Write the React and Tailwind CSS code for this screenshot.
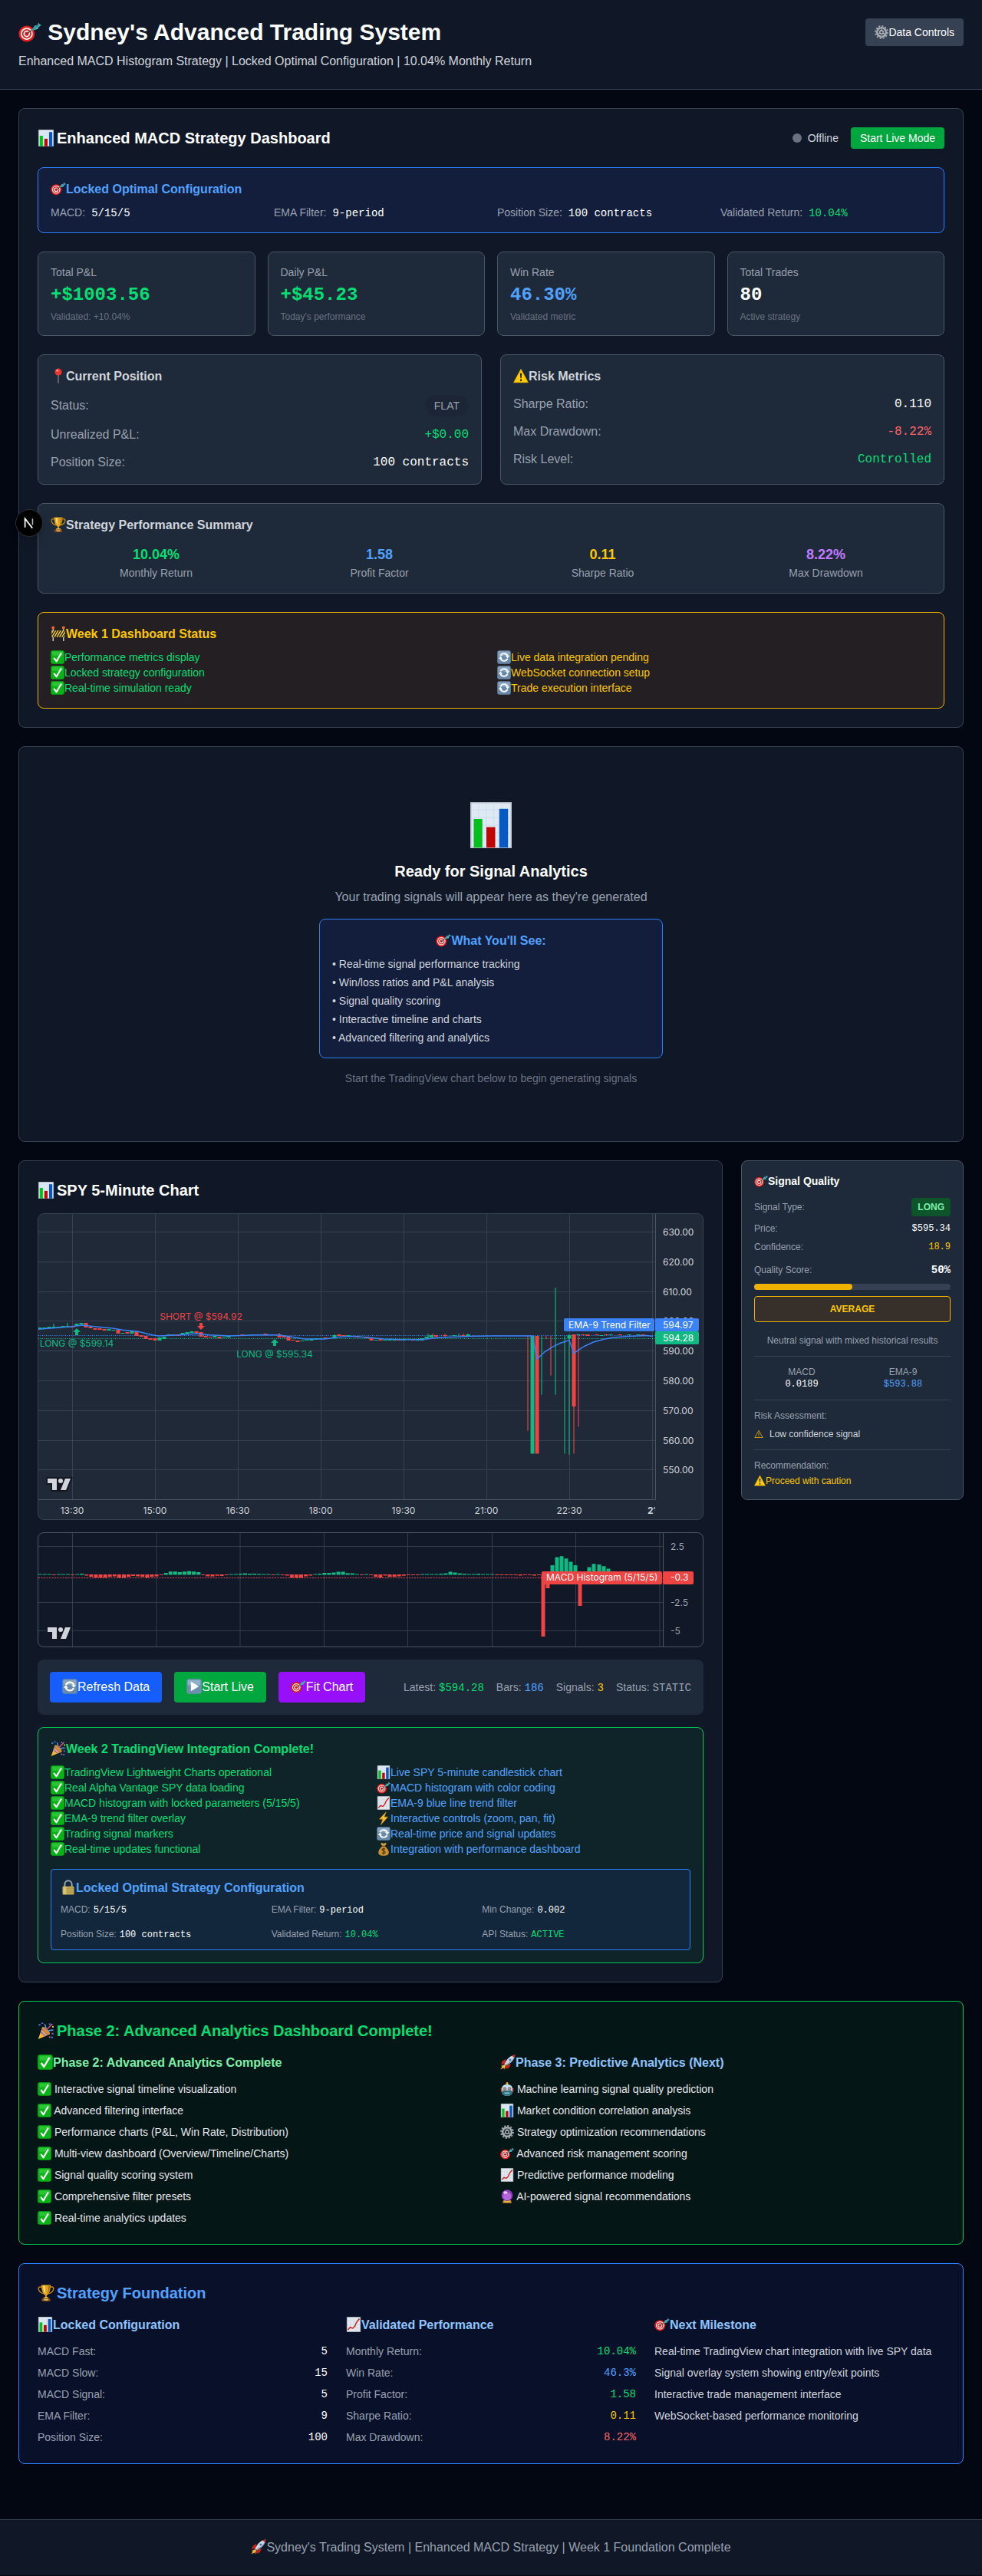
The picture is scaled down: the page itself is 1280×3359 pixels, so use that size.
import React from "react";

/* ---------- Pictograms (24 x 24 grid) ---------- */

const glyphs = {
  target: (
    <>
      <circle cx="8.700" cy="13.600" r="8.500" fill="#b81212" />
      <circle cx="8.700" cy="13.600" r="8" fill="#e02424" />
      <circle cx="8.700" cy="13.600" r="6.300" fill="#f4f4f4" />
      <circle cx="8.700" cy="13.600" r="4.900" fill="#dc1c1c" />
      <circle cx="8.700" cy="13.600" r="3.500" fill="#f4f4f4" />
      <circle cx="8.700" cy="13.600" r="2.100" fill="#dc1c1c" />
      <path d="M8.900 13.500 17 7.600" stroke="#4a4238" strokeWidth="1.200" />
      <path d="M13 10.600 17.500 4.800 19.300 5.200 21.200 2 22 3.800 24 4.600 20.600 7 20.400 8.600Z" fill="#4fb6bd" />
      <path d="M15 9.400 21.600 4.200" stroke="#2b7e86" strokeWidth="0.900" />
    </>
  ),
  bars: (
    <>
      <path d="M1.500.3h21v23.400h-21z" fill="#dfe9f3" stroke="#b9c2cc" strokeWidth="0.600" />
      <path d="M1.500 4h21M1.500 8h21M1.500 12h21M1.500 16h21M1.500 20h21M5.500.3v23.400M9.500.3v23.400M13.500.3v23.400M17.500.3v23.400" stroke="#c9dcf0" strokeWidth="0.350" />
      <path d="M3 8.800h4.500v14.900H3z" fill="#05bf1c" />
      <path d="M9.600 13h4.600v10.700H9.600z" fill="#bf0606" />
      <path d="M16.300 3.500h4.600v20.200h-4.600z" fill="#0559c4" />
    </>
  ),
  trend: (
    <>
      <path d="M1.500.5h21v23h-21z" fill="#e3e8ee" stroke="#b9c2cc" strokeWidth="0.600" />
      <path d="M1.500 6.500h21M1.500 12h21M1.500 17.500h21M7 .5v23M12 .5v23M17 .5v23" stroke="#c4ccd6" strokeWidth="0.500" />
      <path d="M3 20.500 6.500 16.500 10.500 18 14 14.500 16 9.500 21 3" fill="none" stroke="#d01f1f" strokeWidth="1.800" />
    </>
  ),
  pin: (
    <>
      <path d="M11.400 9h1.300v14l-.65.900-.65-.900z" fill="#9a8f8b" />
      <circle cx="12" cy="6" r="5.500" fill="#e8372c" />
      <ellipse cx="10.400" cy="4" rx="1.900" ry="1.500" fill="#ff9a8f" />
    </>
  ),
  warning: (
    <>
      <path d="M12 1.600 23.400 22.600H.6z" fill="#ffcc00" stroke="#e5a900" strokeWidth="0.800" strokeLinejoin="round" />
      <path d="M10.600 8h2.800l-.6 8h-1.600z" fill="#1d1d1d" />
      <circle cx="12" cy="19" r="1.500" fill="#1d1d1d" />
    </>
  ),
  trophy: (
    <>
      <path d="M6 3.500C2 2.500.8 4.500 1.500 7c.8 2.800 3.400 5 7 6M18 3.500c4-1 5.200 1 4.500 3.500-.8 2.800-3.400 5-7 6" fill="none" stroke="#c98a12" strokeWidth="1.600" />
      <path d="M5.400.5h13.200c0 7-2 12.500-5.600 15v3.500h-2v-3.500C7.400 13 5.400 7.500 5.400.5z" fill="#e2a21c" />
      <path d="M8 1.500h2.600c0 5 .4 9 1 12C9.200 11 8 7 8 1.500z" fill="#ffe27a" />
      <path d="M15.500 1.500h2c-.2 5-1.500 9-3.500 11.500 1.200-3.500 1.500-7.500 1.500-11.500z" fill="#a66a08" />
      <path d="M9 18h6l1.200 2.200H7.800z" fill="#f1bd3c" />
      <path d="M6 20h12v3.700H6z" fill="#8b4a12" />
      <path d="M9 21h6v1.500H9z" fill="#f4d67a" />
    </>
  ),
  barrier: (
    <>
      <path d="M3 4h1.800v20H3zM19.200 4H21v20h-1.800z" fill="#c3c7cd" />
      <path d="M1.500 7.500h21v10h-21z" fill="#f0cd32" />
      <path d="M1.500 15 6 7.500M3.800 17.500l6-10M7.800 17.500l6-10M11.800 17.500l6-10M15.800 17.500l6-10M19.800 17.500l2.700-4.500" stroke="#272319" strokeWidth="1.700" />
      <circle cx="3.900" cy="3" r="2.400" fill="#f0642a" />
      <circle cx="20.100" cy="3" r="2.400" fill="#f0642a" />
    </>
  ),
  check: (
    <>
      <rect x="0.300" y="0.300" width="23.400" height="23.400" rx="3.600" fill="#09b316" />
      <path d="M3 2h18v7H3z" fill="#3fd04a" opacity="0.600" />
      <path d="M5.600 13.200 10 19.200 18.600 4.600" fill="none" stroke="#fff" strokeWidth="2.800" strokeLinejoin="round" />
    </>
  ),
  refresh: (
    <>
      <rect x="0.300" y="0.300" width="23.400" height="23.400" rx="3.600" fill="#6789ab" />
      <path d="M2 2h20v8H2z" fill="#a9c4da" opacity="0.500" />
      <path d="M6 9.500A6.600 6.600 0 0 1 18.300 10M18 14.500A6.600 6.600 0 0 1 5.700 14" fill="none" stroke="#fff" strokeWidth="2.600" />
      <path d="M14.600 9.800h7.200L18.200 14zM2.200 14.200h7.200L5.800 10z" fill="#fff" />
    </>
  ),
  play: (
    <>
      <rect x="0.300" y="0.300" width="23.400" height="23.400" rx="3.600" fill="#6d8fae" />
      <path d="M2 2h20v8H2z" fill="#a9c4da" opacity="0.600" />
      <path d="M7 4.500v15L19.500 12z" fill="#fff" />
    </>
  ),
  party: (
    <>
      <path d="M6.800 6.500 17.500 17 .8 24z" fill="#f2b632" />
      <path d="M4.600 13.500 10.800 19.800M6 9.500l8.800 8.700" fill="none" stroke="#9a5fd0" strokeWidth="1.800" />
      <ellipse cx="12.200" cy="11.800" rx="7" ry="2.600" transform="rotate(45 12.200 11.800)" fill="#d98f1e" />
      <path d="M11.500 10c1-3 0-5-1.500-7.500M14 12.500c3-.5 5-2.500 8.500-1" fill="none" stroke="#5a8fe0" strokeWidth="1.700" />
      <path d="M13 11c2-4 5.500-5 8-9" fill="none" stroke="#e0527f" strokeWidth="1.700" />
      <path d="M1.500 2.500h2.600v2.200H1.500zM16 1.500h2.200v2.200H16zM20 15h2.600v2.200H20zM5.500.5h2.400v1.800H5.500zM19.500 20.500h2.200v2.200h-2.200z" fill="#4a78dc" />
      <circle cx="21.800" cy="6.500" r="1.200" fill="#f2c94c" />
      <circle cx="17.200" cy="21" r="1.200" fill="#e0527f" />
    </>
  ),
  bolt: <path d="M16.500.5 4.500 13.500h6L7 23.500 19.500 9.500h-6.300z" fill="#fcb92b" stroke="#d78c10" strokeWidth="0.600" />,
  money: (
    <>
      <path d="M8.500 1 12 2.500 15.500 1 17 2.500l-2.500 4h-5l-2.500-4z" fill="#d5a03a" />
      <path d="M9.500 7.500h5c4 3 6.500 7 6.500 10.500 0 4-3 5.700-9 5.700s-9-1.700-9-5.700c0-3.500 2.500-7.500 6.500-10.500z" fill="#c98f35" />
      <path d="M9 6.200h6v1.800H9z" fill="#7b4a18" />
      <path d="M14.800 12.700c-.7-1-1.700-1.300-2.800-1.300-1.600 0-2.700.8-2.700 2 0 3 5.600 1.400 5.600 4.300 0 1.300-1.200 2.100-2.900 2.100-1.300 0-2.400-.5-3-1.500M12 10v11.500" fill="none" stroke="#43300f" strokeWidth="1.400" />
    </>
  ),
  lock: (
    <>
      <path d="M6.500 12V7a5.500 5.500 0 0 1 11 0v5" fill="none" stroke="#9aa3ad" strokeWidth="2.400" />
      <rect x="3" y="10.500" width="18" height="13" rx="1.200" fill="#c2ab58" />
      <path d="M3 13.500h18M3 16.500h18M3 19.500h18" stroke="#a08a3c" strokeWidth="0.900" />
      <path d="M4 11h5v12H4z" fill="#e2d08a" opacity="0.700" />
    </>
  ),
  rocket: (
    <>
      <path d="M9 7 3 10.500 1.500 16l6-1.500z" fill="#c72318" />
      <path d="M17 15l-3.500 6L8 22.500l1.500-6z" fill="#c72318" />
      <path d="M6.500 15.500C10 7 16 1.500 23.300.7 22.500 8 17 14 8.500 17.500z" fill="#c9d4df" />
      <path d="M18.500 1.800c1.500-.6 3-.9 4.800-1.100-.2 1.800-.5 3.300-1.100 4.800z" fill="#c72318" />
      <path d="M7.500 16.500C14 14 20 8 22.700 3 21.500 9 16 14.500 8.500 17.500z" fill="#7d91a6" />
      <circle cx="15.500" cy="8.500" r="2.200" fill="#2f6fb5" stroke="#eef3f8" strokeWidth="0.700" />
      <path d="M6.500 16 1 18l2 .8-2.500 4.700L5.500 21l.8 2.500L8.500 18z" fill="#f7a823" />
      <path d="M6.500 17 3.500 20.500 7.500 18z" fill="#fff09a" />
    </>
  ),
  robot: (
    <>
      <path d="M11 1h2v5h-2z" fill="#d99a1a" />
      <circle cx="12" cy="2" r="2" fill="#f2a51e" />
      <rect x="1" y="10" width="3" height="7" rx="1" fill="#c8402c" />
      <rect x="20" y="10" width="3" height="7" rx="1" fill="#c8402c" />
      <path d="M3 11c0-5 4-7 9-7s9 2 9 7v6c0 4-3 6.700-9 6.700S3 21 3 17z" fill="#bfe3ea" />
      <path d="M3.200 14.500h17.600v2.500c0 4-3 6.700-8.800 6.700S3.200 21 3.200 17z" fill="#2a6f80" />
      <circle cx="8" cy="11.500" r="2.500" fill="#5aa7b5" stroke="#d24b3a" strokeWidth="1" />
      <circle cx="16" cy="11.500" r="2.500" fill="#5aa7b5" stroke="#d24b3a" strokeWidth="1" />
      <path d="M12 13l1.400 2.600h-2.800z" fill="#d24b3a" />
      <path d="M7.500 18h9v2.200h-9z" fill="#8cc9d4" />
    </>
  ),
  gear: (
    <>
      <circle cx="12" cy="12" r="10.500" fill="none" stroke="#9aa0a6" strokeWidth="2.800" strokeDasharray="3 2.498" />
      <circle cx="12" cy="12" r="7.800" fill="none" stroke="#a7adb2" strokeWidth="3.400" />
      <circle cx="12" cy="12" r="5.800" fill="none" stroke="#5f666d" strokeWidth="0.900" />
      <circle cx="12" cy="12" r="3" fill="none" stroke="#b9bec3" strokeWidth="1.800" />
      <path d="M12 9V6M9.400 13.500 6.800 15M14.600 13.500l2.600 1.500" stroke="#b9bec3" strokeWidth="1.500" />
    </>
  ),
  crystal: (
    <>
      <path d="M5.500 18.500h13l1.500 5.200H4z" fill="#c98a1c" />
      <path d="M7 20.500h10v1.300H7z" fill="#f6d57a" />
      <circle cx="12" cy="10.200" r="9.800" fill="#8e3fb8" />
      <circle cx="12" cy="12" r="7" fill="#b765db" />
      <ellipse cx="9" cy="5.300" rx="3.600" ry="2.200" fill="#ecc9fa" />
    </>
  ),
};

const sizes = {
  xs: "inline-block h-[15px] w-[15px] align-[-3px]",
  sm: "inline-block h-[18px] w-[18px] align-[-4px]",
  base: "inline-block h-5 w-5 align-[-4px]",
  xl: "inline-block h-[22px] w-[25px] align-[-4px]",
  "3xl": "inline-block h-[30px] w-[30px] align-[-5px]",
  "6xl": "inline-block h-[60px] w-[60px]",
};

function Icon({ name, size = "base" }) {
  return (
    <svg viewBox="0 0 24 24" preserveAspectRatio="xMinYMid meet" className={sizes[size]} aria-hidden="true">
      {glyphs[name]}
    </svg>
  );
}

function ChartLogo({ x, y }) {
  return (
    <g transform={`translate(${x} ${y})`} fillRule="evenodd" clipRule="evenodd">
      <path
        fill="#131722"
        d="M2 0H0v10h6v9h21.4l.5-1.3 6-15 1-2.7H23.7l-.5 1.3-.2.6a5 5 0 0 0-7-.9V0H2Zm20 17h4l5.200-13 .8-2h-7l-1 2.500-.2.500-1.500 3.800-.3.700V17Zm-.8-10a3 3 0 0 0 .7-2.700A3 3 0 1 0 16.800 7h4.400ZM14 7V2H2v6h6v9h4V7h2Z"
      />
      <path fill="#d1d4dc" d="M14 2H2v6h6v9h6V2Zm12 15h-7l6-15h7l-6 15Zm-7-9a3 3 0 1 0 0-6 3 3 0 0 0 0 6Z" />
    </g>
  );
}

/* ---------- Price chart ---------- */

const UP = "#10b981";
const DOWN = "#ef4444";

// [bar index, direction, top, height]
const bodies = [
  [0, 1, 148, 2], [1, 1, 148, 2], [2, 1, 147, 2], [3, 1, 147, 2], [4, 1, 147, 2], [5, 1, 146, 2], [6, 1, 146, 2],
  [7, 0, 146, 2], [8, 1, 143, 3], [9, 1, 142, 2], [10, 0, 142, 6], [11, 0, 147, 2], [12, 0, 149, 2], [13, 0, 149, 2],
  [14, 0, 150, 2], [15, 1, 150, 2], [16, 1, 151, 1], [17, 0, 151, 5], [18, 1, 155, 1], [19, 0, 154, 2], [20, 1, 153, 3],
  [21, 0, 153, 6], [22, 0, 158, 2], [23, 0, 159, 4], [24, 0, 162, 2], [25, 0, 162, 3], [26, 1, 161, 4], [27, 1, 160, 3],
  [28, 1, 157, 2], [29, 0, 157, 1], [30, 0, 157, 2], [31, 1, 155, 3], [32, 1, 154, 2], [33, 1, 153, 2], [34, 0, 153, 2],
  [35, 0, 154, 6], [36, 0, 159, 2], [37, 0, 160, 1], [38, 1, 159, 2], [39, 0, 160, 2], [40, 1, 160, 1], [41, 1, 159, 2],
  [44, 0, 157, 1], [46, 1, 157, 1], [49, 0, 156, 1], [52, 0, 157, 4], [53, 0, 159, 2], [54, 0, 160, 5], [55, 0, 164, 1],
  [56, 0, 165, 2], [57, 1, 165, 1], [58, 1, 164, 1], [59, 1, 163, 2], [60, 1, 162, 2], [61, 1, 162, 1], [62, 0, 161, 1],
  [64, 1, 158, 3], [65, 0, 157, 2], [66, 0, 158, 1], [67, 1, 158, 2], [69, 0, 159, 2], [71, 0, 160, 2], [72, 0, 161, 4],
  [73, 1, 164, 1], [74, 0, 163, 2], [75, 1, 164, 1], [76, 1, 163, 2], [77, 1, 164, 1], [78, 0, 163, 2], [79, 1, 164, 1],
  [80, 1, 163, 1], [81, 0, 163, 2], [82, 1, 164, 1], [83, 1, 162, 3], [84, 1, 160, 2], [85, 1, 158, 3], [86, 0, 158, 2],
  [88, 0, 158, 1], [90, 1, 158, 1], [92, 0, 158, 1], [93, 1, 157, 2],
  [107, 1, 159, 153.5], [108, 0, 159, 153.5],
  [121, 0, 157, 1], [122, 1, 158, 1], [123, 0, 157, 1], [124, 1, 157, 1], [126, 0, 157, 1], [128, 1, 157, 1],
  [115, 1, 158, 4], [116, 0, 157, 94], [117, 1, 157, 1], [118, 0, 157, 1], [119, 0, 157, 2],
  [130, 1, 157, 1], [131, 0, 157, 1],
];

// [x, direction, top, bottom]
const wicks = [
  [20, 1, 143, 148], [38, 1, 142, 147], [104, 0, 150, 156], [314, 0, 155, 161], [386, 1, 157, 163], [508, 1, 156, 162],
  [514, 0, 156, 162], [530, 0, 156, 160], [548, 1, 156, 160], [554, 0, 156, 159], [560, 1, 156, 160],
  [638, 0, 159, 282.6], [656, 1, 159, 235.7], [662, 0, 159, 163], [668, 0, 159, 210.6], [674, 1, 96, 235.7],
  [686, 1, 159, 312.5], [692, 1, 157, 313.8], [698, 0, 157, 312.5], [704, 0, 157, 277.4],
];

const emaPoints =
  "0,150.3 44,146.8 57,145.1 70,146.4 97,149 110,151.2 130,153.3 150,158.1 157,159 183,157.7 207,155.9 223,157.7 250,159 283,157.7 313,157.7 330,160.3 347,162.9 373,162.9 393,160.3 410,159.4 430,161.1 450,162.9 473,163.7 500,163.7 523,161.1 563,159.4 590,159 644,159 650,189.3 660,179.8 670,173.3 680,168.5 692,164.6 698,181.5 710,173.3 723,167.2 737,163.3 750,161.1 770,159.4 793,158.5 801,159.4";

const priceTicks = [630, 620, 610, 600, 590, 580, 570, 560, 550];
const timeTicks = ["13:30", "15:00", "16:30", "18:00", "19:30", "21:00", "22:30"];
const priceY = (p) => Math.round(23.2 + (630 - p) * 3.876) + 0.5;

function Arrow({ x, y, up }) {
  return up ? (
    <path d={`M${x} ${y}l5 5h-3v4h-4v-4h-3z`} fill={UP} />
  ) : (
    <path d={`M${x} ${y}l5-5h-3v-4h-4v4h-3z`} fill={DOWN} />
  );
}

function PriceChart() {
  return (
    <div className="mb-4 overflow-hidden rounded-lg border border-gray-700 bg-[#1f2937]">
      <svg viewBox="0 0 866 398" className="block h-auto w-full" fontFamily="Inter, sans-serif" fontSize="12" role="img" aria-label="SPY candlestick chart">
        <g stroke="#374151" strokeWidth="1">
          {priceTicks.map((p) => (
            <path key={p} d={`M0 ${priceY(p)}H804`} />
          ))}
          {[44, 152, 260, 368, 476, 584, 692, 800].map((x) => (
            <path key={x} d={`M${x + 0.5} 0V372`} />
          ))}
        </g>
        <g fill="none" strokeDasharray="1 1.5">
          <path d="M0 158.5H804" stroke="#3b82f6" />
          <path d="M0 162.5H804" stroke={UP} />
        </g>
        {wicks.map(([x, d, t, b]) => (
          <rect key={`${x}-${t}`} x={x - 1} y={t} width="2" height={b - t} fill={d ? UP : DOWN} opacity="0.55" />
        ))}
        {bodies.map(([i, d, t, h]) => (
          <rect key={i} x={i * 6 - 0.5} y={t} width="5" height={h} fill={d ? UP : DOWN} />
        ))}
        <polyline points={emaPoints} fill="none" stroke="#3b82f6" strokeWidth="1.5" />
        <Arrow x={50} y={149} up />
        <Arrow x={212} y={151} />
        <Arrow x={308} y={163} up />
        <g textAnchor="middle">
          <text x="50" y="173" fill={UP}>LONG @ $599.14</text>
          <text x="212" y="138" fill={DOWN}>SHORT @ $594.92</text>
          <text x="308" y="187" fill={UP}>LONG @ $595.34</text>
        </g>
        <path d="M0 372.5H804.5V0" fill="none" stroke="#4b5563" />
        <g fill="#d1d5db">
          {priceTicks.map((p) => (
            <text key={p} x="814" y={priceY(p) + 4}>{p}.00</text>
          ))}
          <g textAnchor="middle">
            {timeTicks.map((t, i) => (
              <text key={t} x={44 + i * 108} y="391">{t}</text>
            ))}
          </g>
          <svg x="780" y="376" width="24" height="20">
            <text x="14" y="15" fontWeight="700">21</text>
          </svg>
        </g>
        <rect x="685" y="136" width="118" height="17" rx="2" fill="#3b82f6" />
        <rect x="804" y="136" width="57" height="17" rx="2" fill="#3b82f6" />
        <rect x="804" y="153" width="57" height="17" rx="2" fill={UP} />
        <g fill="#fff">
          <text x="691" y="149">EMA-9 Trend Filter</text>
          <text x="814" y="149">594.97</text>
          <text x="814" y="166">594.28</text>
        </g>
        <ChartLogo x={10} y={343} />
      </svg>
    </div>
  );
}

/* ---------- MACD histogram ---------- */

// Signed bar heights, left to right
const macd = [
  1, 1, 1, -1, 1, 1, 1, -1, 1, 1.5, -1.5, -3, -4, -4, -4, -3, -2.5, -4, -4, -3, -2, -2.5, -3, -4, -3, -2.5, -1, 2.5, 4.3, 4.3,
  3.5, 4.3, 4.8, 4.3, 3.5, -1, -2.5, -2.6, -1.7, -2, -1, 1, 1, 1.5, 2, 1.5, 1.5, 1.2, 1, 1, -1, 1, -1, -1.5, -4, -4, -4, -2.5, -1.5, 1, 1.5,
  2.5, 2.5, 3, 4, 4, 2.2, 2, 1, -1, 1, -1, -3, -4, -1.5, -3, -3, -2.5, -1.7, -1, -1, -1, 1, 1, 1, 1, 1.5, 2, 4, 3, 2, 1.5, 1, 1, 1.5, 1, 1, 1, -1,
  -1, -1, -1, -1, -1.5, -1, -1, -1.5, -1,
];

const macdSpikes = [
  [658, -81], [664, -18], [670, 12.5], [676, 23], [682, 24.3], [688, 21.3], [694, 17], [700, 12.5], [706, -41],
  [718, 10], [724, 14.3], [731, 13.5], [737, 11.3], [743, 8], [749, 4.7],
];

function Bar({ x, h }) {
  return <rect x={x - 2.5} y={h > 0 ? 54.5 - h : 54} width="5" height={Math.abs(h)} fill={h > 0 ? UP : DOWN} />;
}

function MacdChart() {
  return (
    <div className="mb-4 overflow-hidden rounded-lg border border-gray-600 bg-[#111827]">
      <svg viewBox="0 0 866 148" className="block h-auto w-full" fontFamily="Inter, sans-serif" fontSize="12" role="img" aria-label="MACD histogram">
        <g stroke="#323c4b" strokeWidth="1">
          {[17.5, 90.5, 127.5].map((y) => (
            <path key={y} d={`M0 ${y}H814`} />
          ))}
          {[44.5, 154, 263, 372.5, 481.5, 591.5, 700.5, 810].map((x) => (
            <path key={x} d={`M${x} 0V148`} />
          ))}
        </g>
        {macd.map((h, i) => (
          <Bar key={i} x={2 + i * 6.08} h={h} />
        ))}
        {macdSpikes.map(([x, h]) => (
          <Bar key={x} x={x} h={h} />
        ))}
        <path d="M0 58.5H814" stroke={DOWN} strokeDasharray="2 1.5" />
        <path d="M814.5 0V148" stroke="#4b5563" />
        <g fill="#9ca3af">
          <text x="824" y="22">2.5</text>
          <text x="824" y="95">-2.5</text>
          <text x="824" y="132">-5</text>
        </g>
        <rect x="656" y="50" width="157" height="17" rx="2" fill={DOWN} />
        <rect x="814" y="50" width="40" height="17" rx="2" fill={DOWN} />
        <g fill="#fff">
          <text x="662" y="62">MACD Histogram (5/15/5)</text>
          <text x="824" y="62">-0.3</text>
        </g>
        <ChartLogo x={10} y={121} />
      </svg>
    </div>
  );
}

/* ---------- Shared pieces ---------- */

function ValueRow({ label, value, color = "text-white" }) {
  return (
    <div className="flex items-center justify-between">
      <span className="text-gray-400">{label}</span>
      <span className={`font-['Liberation_Mono',monospace] ${color}`}>{value}</span>
    </div>
  );
}

function Pair({ label, value, color = "text-white", gap = "ml-1" }) {
  return (
    <div>
      <span className="text-gray-400">{label}</span>
      <span className={`font-['Liberation_Mono',monospace] leading-none ${gap} ${color}`}>{value}</span>
    </div>
  );
}

const stats = [
  ["Total P&L", "+$1003.56", "Validated: +10.04%", "text-green-400"],
  ["Daily P&L", "+$45.23", "Today's performance", "text-green-400"],
  ["Win Rate", "46.30%", "Validated metric", "text-blue-400"],
  ["Total Trades", "80", "Active strategy", "text-white"],
];

const summary = [
  ["10.04%", "Monthly Return", "text-green-400"],
  ["1.58", "Profit Factor", "text-blue-400"],
  ["0.11", "Sharpe Ratio", "text-yellow-400"],
  ["8.22%", "Max Drawdown", "text-purple-400"],
];

function StrategyDashboard() {
  return (
    <section className="rounded-lg border border-gray-700 bg-gray-900 p-6">
      <div className="mb-6 flex items-center justify-between">
        <h2 className="text-xl font-bold">
          <Icon name="bars" size="xl" />
          Enhanced MACD Strategy Dashboard
        </h2>
        <div className="flex items-center gap-4">
          <div className="flex items-center gap-2">
            <span className="h-3 w-3 rounded-full bg-gray-500" />
            <span className="text-sm text-gray-300">Offline</span>
          </div>
          <button type="button" className="rounded bg-green-600 px-3 py-1 text-sm">Start Live Mode</button>
        </div>
      </div>

      <div className="mb-6 rounded-lg border border-blue-500 bg-blue-900/20 p-4">
        <h3 className="mb-2 font-semibold text-blue-400">
          <Icon name="target" />
          Locked Optimal Configuration
        </h3>
        <div className="grid grid-cols-4 gap-4 text-sm">
          <Pair label="MACD:" value="5/15/5" gap="ml-2" />
          <Pair label="EMA Filter:" value="9-period" gap="ml-2" />
          <Pair label="Position Size:" value="100 contracts" gap="ml-2" />
          <Pair label="Validated Return:" value="10.04%" color="text-green-400" gap="ml-2" />
        </div>
      </div>

      <div className="mb-6 grid grid-cols-4 gap-4">
        {stats.map(([label, value, note, color]) => (
          <div key={label} className="rounded-lg border border-gray-600 bg-gray-800 p-4">
            <div className="text-sm text-gray-400">{label}</div>
            <div className={`mt-1 font-['Liberation_Mono',monospace] text-2xl font-bold ${color}`}>{value}</div>
            <div className="mt-1 text-xs text-gray-500">{note}</div>
          </div>
        ))}
      </div>

      <div className="mb-6 grid grid-cols-2 gap-6">
        <div className="rounded-lg border border-gray-600 bg-gray-800 p-4">
          <h3 className="mb-3 font-semibold text-gray-300">
            <Icon name="pin" />
            Current Position
          </h3>
          <div className="space-y-3">
            <div className="flex items-center justify-between">
              <span className="text-gray-400">Status:</span>
              <span className="rounded-full bg-gray-900/20 px-3 py-1 text-sm text-gray-400">FLAT</span>
            </div>
            <ValueRow label="Unrealized P&L:" value="+$0.00" color="text-green-400" />
            <ValueRow label="Position Size:" value="100 contracts" />
          </div>
        </div>
        <div className="rounded-lg border border-gray-600 bg-gray-800 p-4">
          <h3 className="mb-3 font-semibold text-gray-300">
            <Icon name="warning" />
            Risk Metrics
          </h3>
          <div className="space-y-3">
            <ValueRow label="Sharpe Ratio:" value="0.110" />
            <ValueRow label="Max Drawdown:" value="-8.22%" color="text-red-400" />
            <ValueRow label="Risk Level:" value="Controlled" color="text-green-400" />
          </div>
        </div>
      </div>

      <div className="mb-6 rounded-lg border border-gray-600 bg-gray-800 p-4">
        <h3 className="mb-3 font-semibold text-gray-300">
          <Icon name="trophy" />
          Strategy Performance Summary
        </h3>
        <div className="grid grid-cols-4 gap-4 text-center">
          {summary.map(([value, label, color]) => (
            <div key={label}>
              <div className={`text-lg font-bold ${color}`}>{value}</div>
              <div className="text-sm text-gray-400">{label}</div>
            </div>
          ))}
        </div>
      </div>

      <div className="rounded-lg border border-yellow-500 bg-yellow-900/20 p-4">
        <h3 className="mb-2 font-semibold text-yellow-400">
          <Icon name="barrier" />
          Week 1 Dashboard Status
        </h3>
        <div className="grid grid-cols-2 gap-4 text-sm">
          <ul className="text-green-400">
            {["Performance metrics display", "Locked strategy configuration", "Real-time simulation ready"].map((t) => (
              <li key={t}>
                <Icon name="check" size="sm" />
                {t}
              </li>
            ))}
          </ul>
          <ul className="text-yellow-400">
            {["Live data integration pending", "WebSocket connection setup", "Trade execution interface"].map((t) => (
              <li key={t}>
                <Icon name="refresh" size="sm" />
                {t}
              </li>
            ))}
          </ul>
        </div>
      </div>
    </section>
  );
}

function SignalAnalytics() {
  return (
    <section className="rounded-lg border border-gray-700 bg-gray-900 px-6 py-[72px] text-center">
      <div className="mb-4 flex justify-center">
        <Icon name="bars" size="6xl" />
      </div>
      <h2 className="mb-2 text-xl font-bold">Ready for Signal Analytics</h2>
      <p className="mb-4 text-gray-400">Your trading signals will appear here as they're generated</p>
      <div className="mx-auto max-w-md rounded-lg border border-blue-500 bg-blue-900/20 p-4">
        <h3 className="mb-2 font-semibold text-blue-400">
          <Icon name="target" />
          What You'll See:
        </h3>
        <ul className="space-y-1 text-left text-sm text-gray-300">
          <li>• Real-time signal performance tracking</li>
          <li>• Win/loss ratios and P&amp;L analysis</li>
          <li>• Signal quality scoring</li>
          <li>• Interactive timeline and charts</li>
          <li>• Advanced filtering and analytics</li>
        </ul>
      </div>
      <p className="mt-4 text-sm text-gray-500">Start the TradingView chart below to begin generating signals</p>
    </section>
  );
}

const weekTwoDone = [
  "TradingView Lightweight Charts operational",
  "Real Alpha Vantage SPY data loading",
  "MACD histogram with locked parameters (5/15/5)",
  "EMA-9 trend filter overlay",
  "Trading signal markers",
  "Real-time updates functional",
];

const weekTwoFeatures = [
  ["bars", "Live SPY 5-minute candlestick chart"],
  ["target", "MACD histogram with color coding"],
  ["trend", "EMA-9 blue line trend filter"],
  ["bolt", "Interactive controls (zoom, pan, fit)"],
  ["refresh", "Real-time price and signal updates"],
  ["money", "Integration with performance dashboard"],
];

function ChartPanel() {
  return (
    <section className="col-span-3 rounded-lg border border-gray-700 bg-gray-900 p-6">
      <h2 className="mb-4 text-xl font-bold">
        <Icon name="bars" size="xl" />
        SPY 5-Minute Chart
      </h2>
      <PriceChart />
      <MacdChart />

      <div className="mb-4 flex items-center justify-between rounded-lg bg-gray-800 p-4">
        <div className="flex gap-4">
          <button type="button" className="rounded bg-blue-600 px-4 py-2">
            <Icon name="refresh" />
            Refresh Data
          </button>
          <button type="button" className="rounded bg-green-600 px-4 py-2">
            <Icon name="play" />
            Start Live
          </button>
          <button type="button" className="rounded bg-purple-600 px-4 py-2">
            <Icon name="target" />
            Fit Chart
          </button>
        </div>
        <div className="flex gap-4 text-sm">
          <Pair label="Latest:" value="$594.28" color="text-green-400" />
          <Pair label="Bars:" value="186" color="text-blue-400" />
          <Pair label="Signals:" value="3" color="text-yellow-400" />
          <Pair label="Status:" value="STATIC" color="text-gray-400" />
        </div>
      </div>

      <div className="rounded-lg border border-green-500 bg-green-900/20 p-4">
        <h3 className="mb-2 font-semibold text-green-400">
          <Icon name="party" />
          Week 2 TradingView Integration Complete!
        </h3>
        <div className="grid grid-cols-2 gap-4 text-sm">
          <ul className="text-green-400">
            {weekTwoDone.map((t) => (
              <li key={t}>
                <Icon name="check" size="sm" />
                {t}
              </li>
            ))}
          </ul>
          <ul className="text-blue-400">
            {weekTwoFeatures.map(([icon, t]) => (
              <li key={t}>
                <Icon name={icon} size="sm" />
                {t}
              </li>
            ))}
          </ul>
        </div>
        <div className="mt-4 rounded border border-blue-500 bg-blue-900/20 p-3">
          <h4 className="mb-2 font-semibold text-blue-400">
            <Icon name="lock" />
            Locked Optimal Strategy Configuration
          </h4>
          <div className="grid grid-cols-3 gap-4 text-xs">
            <Pair label="MACD:" value="5/15/5" />
            <Pair label="EMA Filter:" value="9-period" />
            <Pair label="Min Change:" value="0.002" />
            <Pair label="Position Size:" value="100 contracts" />
            <Pair label="Validated Return:" value="10.04%" color="text-green-400" />
            <Pair label="API Status:" value="ACTIVE" color="text-green-400" />
          </div>
        </div>
      </div>
    </section>
  );
}

function SignalQuality() {
  return (
    <aside className="self-start rounded-lg border border-gray-600 bg-gray-800 p-4 text-xs">
      <h3 className="mb-3 text-sm font-semibold">
        <Icon name="target" size="sm" />
        Signal Quality
      </h3>
      <div className="space-y-2">
        <div className="flex items-center justify-between">
          <span className="text-gray-400">Signal Type:</span>
          <span className="rounded bg-green-900 px-2 py-1 font-bold text-green-300">LONG</span>
        </div>
        <ValueRow label="Price:" value="$595.34" />
        <ValueRow label="Confidence:" value="18.9" color="text-yellow-400" />
      </div>
      <div className="mt-3 flex items-center justify-between">
        <span className="text-gray-400">Quality Score:</span>
        <span className="font-['Liberation_Mono',monospace] text-sm font-bold">50%</span>
      </div>
      <div className="mt-2 h-2 rounded-full bg-gray-700">
        <div className="h-2 w-1/2 rounded-full bg-yellow-500" />
      </div>
      <div className="mt-2 rounded border border-yellow-500 bg-yellow-900/30 py-2 text-center font-bold text-yellow-400">AVERAGE</div>
      <p className="mt-4 mb-3 text-center text-gray-400">Neutral signal with mixed historical results</p>
      <div className="grid grid-cols-2 gap-2 border-t border-gray-700 py-3 text-center">
        <div>
          <div className="text-gray-400">MACD</div>
          <div className="font-['Liberation_Mono',monospace]">0.0189</div>
        </div>
        <div>
          <div className="text-gray-400">EMA-9</div>
          <div className="font-['Liberation_Mono',monospace] text-blue-400">$593.88</div>
        </div>
      </div>
      <div className="border-t border-gray-700 py-3">
        <div className="mb-2 text-gray-400">Risk Assessment:</div>
        <div className="flex items-center gap-2 text-gray-300">
          <svg viewBox="0 0 12 12" className="h-3 w-3" fill="none" stroke="#c99a0a" aria-hidden="true">
            <path d="M6 1.300 11.200 10.500H.8z" strokeWidth="1" strokeLinejoin="round" />
            <path d="M6 4.200v3.400M6 8.300v1.200" strokeWidth="1" />
          </svg>
          Low confidence signal
        </div>
      </div>
      <div className="border-t border-gray-700 pt-3">
        <div className="mb-1 text-gray-400">Recommendation:</div>
        <div className="text-yellow-400">
          <Icon name="warning" size="xs" />
          Proceed with caution
        </div>
      </div>
    </aside>
  );
}

const phaseTwo = [
  "Interactive signal timeline visualization",
  "Advanced filtering interface",
  "Performance charts (P&L, Win Rate, Distribution)",
  "Multi-view dashboard (Overview/Timeline/Charts)",
  "Signal quality scoring system",
  "Comprehensive filter presets",
  "Real-time analytics updates",
];

const phaseThree = [
  ["robot", "Machine learning signal quality prediction"],
  ["bars", "Market condition correlation analysis"],
  ["gear", "Strategy optimization recommendations"],
  ["target", "Advanced risk management scoring"],
  ["trend", "Predictive performance modeling"],
  ["crystal", "AI-powered signal recommendations"],
];

function Phases() {
  return (
    <section className="rounded-lg border border-green-500 bg-green-900/20 p-6">
      <h2 className="mb-4 text-xl font-bold text-green-400">
        <Icon name="party" size="xl" />
        Phase 2: Advanced Analytics Dashboard Complete!
      </h2>
      <div className="grid grid-cols-2 gap-6">
        <div>
          <h3 className="mb-3 font-semibold text-green-300">
            <Icon name="check" />
            Phase 2: Advanced Analytics Complete
          </h3>
          <ul className="space-y-2 text-sm text-gray-200">
            {phaseTwo.map((t) => (
              <li key={t}>
                <Icon name="check" size="sm" /> {t}
              </li>
            ))}
          </ul>
        </div>
        <div>
          <h3 className="mb-3 font-semibold text-blue-300">
            <Icon name="rocket" />
            Phase 3: Predictive Analytics (Next)
          </h3>
          <ul className="space-y-2 text-sm text-gray-200">
            {phaseThree.map(([icon, t]) => (
              <li key={t}>
                <Icon name={icon} size="sm" /> {t}
              </li>
            ))}
          </ul>
        </div>
      </div>
    </section>
  );
}

function Foundation() {
  return (
    <section className="rounded-lg border border-blue-500 bg-blue-900/20 p-6">
      <h2 className="mb-4 text-xl font-bold text-blue-400">
        <Icon name="trophy" size="xl" />
        Strategy Foundation
      </h2>
      <div className="grid grid-cols-3 gap-6">
        <div>
          <h3 className="mb-3 font-semibold text-blue-300">
            <Icon name="bars" />
            Locked Configuration
          </h3>
          <div className="space-y-2 text-sm">
            <ValueRow label="MACD Fast:" value="5" />
            <ValueRow label="MACD Slow:" value="15" />
            <ValueRow label="MACD Signal:" value="5" />
            <ValueRow label="EMA Filter:" value="9" />
            <ValueRow label="Position Size:" value="100" />
          </div>
        </div>
        <div>
          <h3 className="mb-3 font-semibold text-blue-300">
            <Icon name="trend" />
            Validated Performance
          </h3>
          <div className="space-y-2 text-sm">
            <ValueRow label="Monthly Return:" value="10.04%" color="text-green-400" />
            <ValueRow label="Win Rate:" value="46.3%" color="text-blue-400" />
            <ValueRow label="Profit Factor:" value="1.58" color="text-green-400" />
            <ValueRow label="Sharpe Ratio:" value="0.11" color="text-yellow-400" />
            <ValueRow label="Max Drawdown:" value="8.22%" color="text-red-400" />
          </div>
        </div>
        <div>
          <h3 className="mb-3 font-semibold text-blue-300">
            <Icon name="target" />
            Next Milestone
          </h3>
          <div className="space-y-2 text-sm text-gray-300">
            <p>Real-time TradingView chart integration with live SPY data</p>
            <p>Signal overlay system showing entry/exit points</p>
            <p>Interactive trade management interface</p>
            <p>WebSocket-based performance monitoring</p>
          </div>
        </div>
      </div>
    </section>
  );
}

export default function App() {
  return (
    <div className="relative min-h-screen bg-gray-950 font-['Liberation_Sans',Arial,sans-serif] text-base text-white">
      <header className="flex items-start justify-between border-b border-gray-700 bg-gray-900 p-6">
        <div>
          <h1 className="text-3xl font-bold">
            <Icon name="target" size="3xl" /> Sydney's Advanced Trading System
          </h1>
          <p className="mt-2 text-gray-300">
            Enhanced MACD Histogram Strategy | Locked Optimal Configuration | 10.04% Monthly Return
          </p>
        </div>
        <button type="button" className="rounded bg-gray-700 px-3 py-2 text-sm">
          <Icon name="gear" size="sm" />
          Data Controls
        </button>
      </header>

      <main className="space-y-6 p-6">
        <StrategyDashboard />
        <SignalAnalytics />
        <div className="grid grid-cols-4 gap-6">
          <ChartPanel />
          <SignalQuality />
        </div>
        <Phases />
        <Foundation />
      </main>

      <footer className="mt-12 border-t border-gray-700 bg-gray-900 p-6 text-center text-gray-400">
        <Icon name="rocket" />
        Sydney's Trading System | Enhanced MACD Strategy | Week 1 Foundation Complete
      </footer>

      <button
        type="button"
        aria-label="Open developer tools"
        className="absolute top-[664px] left-5 flex h-9 w-9 items-center justify-center rounded-full border border-[#2e2e2e] bg-black shadow-lg"
      >
        <svg viewBox="0 0 14 14" className="h-4 w-4" fill="none" aria-hidden="true">
          <path d="M2.300 12V2l8.400 10.800" stroke="#fff" strokeWidth="1.500" />
          <path d="M10.900 2v7" stroke="#b5b5b5" strokeWidth="1.400" />
        </svg>
      </button>
    </div>
  );
}
